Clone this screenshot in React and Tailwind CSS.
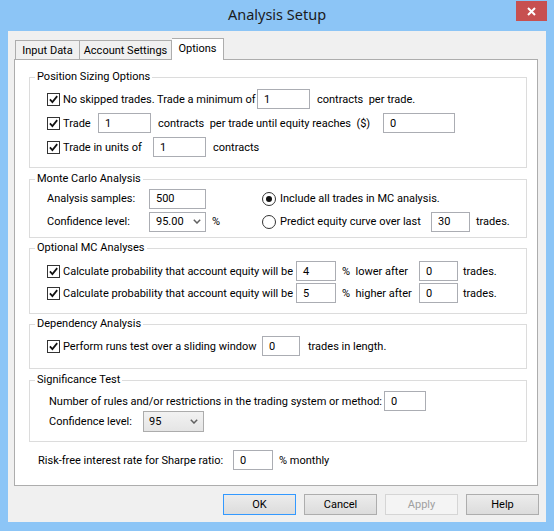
import React from "react";

function Check() {
  return (
    <span className="flex h-[13px] w-[13px] shrink-0 items-center justify-center border border-[#333333] bg-white">
      <svg width="9" height="9" viewBox="0 0 9 9" fill="none">
        <path d="M0.9 4.4 L3.4 7.1 L8.2 1.1" stroke="#111111" strokeWidth="1.7" />
      </svg>
    </span>
  );
}

function Radio({ on }) {
  return (
    <span className="flex h-[14px] w-[14px] shrink-0 items-center justify-center rounded-full border border-[#333333] bg-white">
      {on && <span className="h-[6px] w-[6px] rounded-full bg-[#111111]" />}
    </span>
  );
}

function Field({ w, children }) {
  return (
    <div className={`flex h-[20px] shrink-0 items-center border border-[#abadb3] bg-white pl-[6px] ${w}`}>
      {children}
    </div>
  );
}

function Chevron() {
  return (
    <svg width="8" height="5" viewBox="0 0 8 5" fill="none">
      <path d="M0.8 0.8 L4 4 L7.2 0.8" stroke="#606060" strokeWidth="1.5" />
    </svg>
  );
}

function Group({ title, className, children }) {
  return (
    <fieldset className={`ml-[14px] w-[498px] border border-[#dcdcdc] ${className}`}>
      <legend className="ml-[5px] px-[2px] leading-[16px]">{title}</legend>
      {children}
    </fieldset>
  );
}

function Btn({ children, cls }) {
  return (
    <div className={`flex h-[21px] w-[73px] items-center justify-center border ${cls}`}>{children}</div>
  );
}

export default function App() {
  return (
    <div className="flex h-[531px] w-[554px] flex-col overflow-hidden bg-[#8cc5f6] font-['Roboto',sans-serif] text-[11px] leading-none text-black">
      {/* title bar */}
      <div className="grid h-[31px] grid-cols-[1fr_auto_1fr]">
        <div />
        <div className="pt-[7px] font-['Noto_Sans',sans-serif] text-[14.5px] text-[#1b1b1b]">Analysis Setup</div>
        <div className="flex justify-end pr-[7px] pt-[1px]">
          <div className="flex h-[20px] w-[31px] items-center justify-center bg-[#c75050]">
            <svg width="9" height="9" viewBox="0 0 9 9">
              <path d="M1 1 L8 8 M8 1 L1 8" stroke="#ffffff" strokeWidth="2" />
            </svg>
          </div>
        </div>
      </div>

      {/* client */}
      <div className="mx-[8px] flex h-[491px] flex-col bg-[#f0f0f0]">
        {/* tabs */}
        <div className="mt-[6px] flex h-[22px] items-end pl-[7px]">
          <div className="flex h-[19px] w-[65px] items-center justify-center border border-b-0 border-[#adadad] bg-[#f0f0f0]">
            Input Data
          </div>
          <div className="flex h-[19px] w-[92px] items-center justify-center border border-b-0 border-l-0 border-[#adadad] bg-[#f0f0f0]">
            Account Settings
          </div>
          <div className="relative z-10 mb-[-1px] flex h-[22px] w-[52px] items-center justify-center border border-b-0 border-l-0 border-[#adadad] bg-white pb-[2px]">
            Options
          </div>
        </div>

        {/* panel */}
        <div className="ml-[6px] flex h-[427px] w-[524px] flex-col border border-[#adadad] bg-white">
          {/* Position sizing */}
          <Group title="Position Sizing Options" className="mt-[9px] pb-[8px] pt-[2px]">
            <div className="flex h-[24px] items-center">
              <span className="ml-[17px]"><Check /></span>
              <span className="w-[197px] shrink-0 whitespace-nowrap pl-[3px]">No skipped trades. Trade a minimum of</span>
              <Field w="w-[53px]">1</Field>
              <span className="whitespace-pre pl-[7px]">contracts  per trade.</span>
            </div>
            <div className="flex h-[24px] items-center">
              <span className="ml-[17px]"><Check /></span>
              <span className="w-[38px] shrink-0 pl-[3px]">Trade</span>
              <Field w="w-[53px]">1</Field>
              <span className="w-[232px] shrink-0 whitespace-pre pl-[7px]">contracts  per trade until equity reaches  ($)</span>
              <Field w="w-[72px]">0</Field>
            </div>
            <div className="flex h-[24px] items-center">
              <span className="ml-[17px]"><Check /></span>
              <span className="w-[93px] shrink-0 whitespace-nowrap pl-[3px]">Trade in units of</span>
              <Field w="w-[53px]">1</Field>
              <span className="pl-[7px]">contracts</span>
            </div>
          </Group>

          {/* Monte Carlo */}
          <Group title="Monte Carlo Analysis" className="mt-[3px] pb-[4px]">
            <div className="flex h-[23px] items-center">
              <span className="ml-[17px] w-[102px] shrink-0 whitespace-nowrap">Analysis samples:</span>
              <Field w="w-[57px]">500</Field>
              <span className="ml-[56px]"><Radio on /></span>
              <span className="ml-[4px] whitespace-nowrap">Include all trades in MC analysis.</span>
            </div>
            <div className="flex h-[23px] items-center">
              <span className="ml-[17px] w-[102px] shrink-0 whitespace-nowrap">Confidence level:</span>
              <div className="flex h-[20px] w-[57px] shrink-0 items-center justify-between border border-[#abadb3] bg-white pl-[6px] pr-[4px]">
                <span>95.00</span>
                <Chevron />
              </div>
              <span className="w-[56px] shrink-0 pl-[6px]">%</span>
              <Radio />
              <span className="ml-[4px] w-[151px] shrink-0 whitespace-nowrap">Predict equity curve over last</span>
              <Field w="w-[39px]">30</Field>
              <span className="pl-[6px]">trades.</span>
            </div>
          </Group>

          {/* Optional MC */}
          <Group title="Optional MC Analyses" className="mt-[2px] pb-[9px] pt-[4px]">
            {[
              ["4", "%  lower after"],
              ["5", "%  higher after"],
            ].map(([v, t]) => (
              <div key={v} className="flex h-[22px] items-center">
                <span className="ml-[17px]"><Check /></span>
                <span className="w-[236px] shrink-0 whitespace-nowrap pl-[3px]">Calculate probability that account equity will be</span>
                <Field w="w-[40px]">{v}</Field>
                <span className="w-[83px] shrink-0 whitespace-pre pl-[6px]">{t}</span>
                <Field w="w-[39px]">0</Field>
                <span className="pl-[5px]">trades.</span>
              </div>
            ))}
          </Group>

          {/* Dependency */}
          <Group title="Dependency Analysis" className="mt-[2px] pb-[10px] pt-[2px]">
            <div className="flex h-[24px] items-center">
              <span className="ml-[17px]"><Check /></span>
              <span className="w-[202px] shrink-0 whitespace-nowrap pl-[3px]">Perform runs test over a sliding window</span>
              <Field w="w-[38px]">0</Field>
              <span className="pl-[8px]">trades in length.</span>
            </div>
          </Group>

          {/* Significance */}
          <Group title="Significance Test" className="mt-[3px] pb-[10px] pt-[3px]">
            <div className="flex h-[20px] items-center">
              <span className="ml-[19px] w-[335px] shrink-0 whitespace-nowrap">
                Number of rules and/or restrictions in the trading system or method:
              </span>
              <Field w="w-[42px]">0</Field>
            </div>
            <div className="flex h-[20px] items-center">
              <span className="ml-[19px] w-[94px] shrink-0 whitespace-nowrap">Confidence level:</span>
              <div className="flex h-[21px] w-[61px] shrink-0 items-center justify-between border border-[#acacac] bg-gradient-to-b from-[#f2f2f2] to-[#e5e5e5] pl-[5px] pr-[5px]">
                <span>95</span>
                <Chevron />
              </div>
            </div>
          </Group>

          {/* Risk-free */}
          <div className="mt-[8px] flex h-[20px] items-center">
            <span className="ml-[23px] w-[195px] shrink-0 whitespace-nowrap">Risk-free interest rate for Sharpe ratio:</span>
            <Field w="w-[40px]">0</Field>
            <span className="pl-[6px]">% monthly</span>
          </div>
        </div>

        {/* buttons */}
        <div className="mt-[8px] flex justify-end gap-[8px] pr-[7px]">
          <Btn cls="border-[#3399ff] bg-gradient-to-b from-[#ececec] to-[#dcdcdc]">OK</Btn>
          <Btn cls="border-[#adadad] bg-gradient-to-b from-[#ececec] to-[#dcdcdc]">Cancel</Btn>
          <Btn cls="border-[#d5d5d5] bg-[#f4f4f4] text-[#a0a0a0]">Apply</Btn>
          <Btn cls="border-[#adadad] bg-gradient-to-b from-[#ececec] to-[#dcdcdc]">Help</Btn>
        </div>
      </div>
    </div>
  );
}
